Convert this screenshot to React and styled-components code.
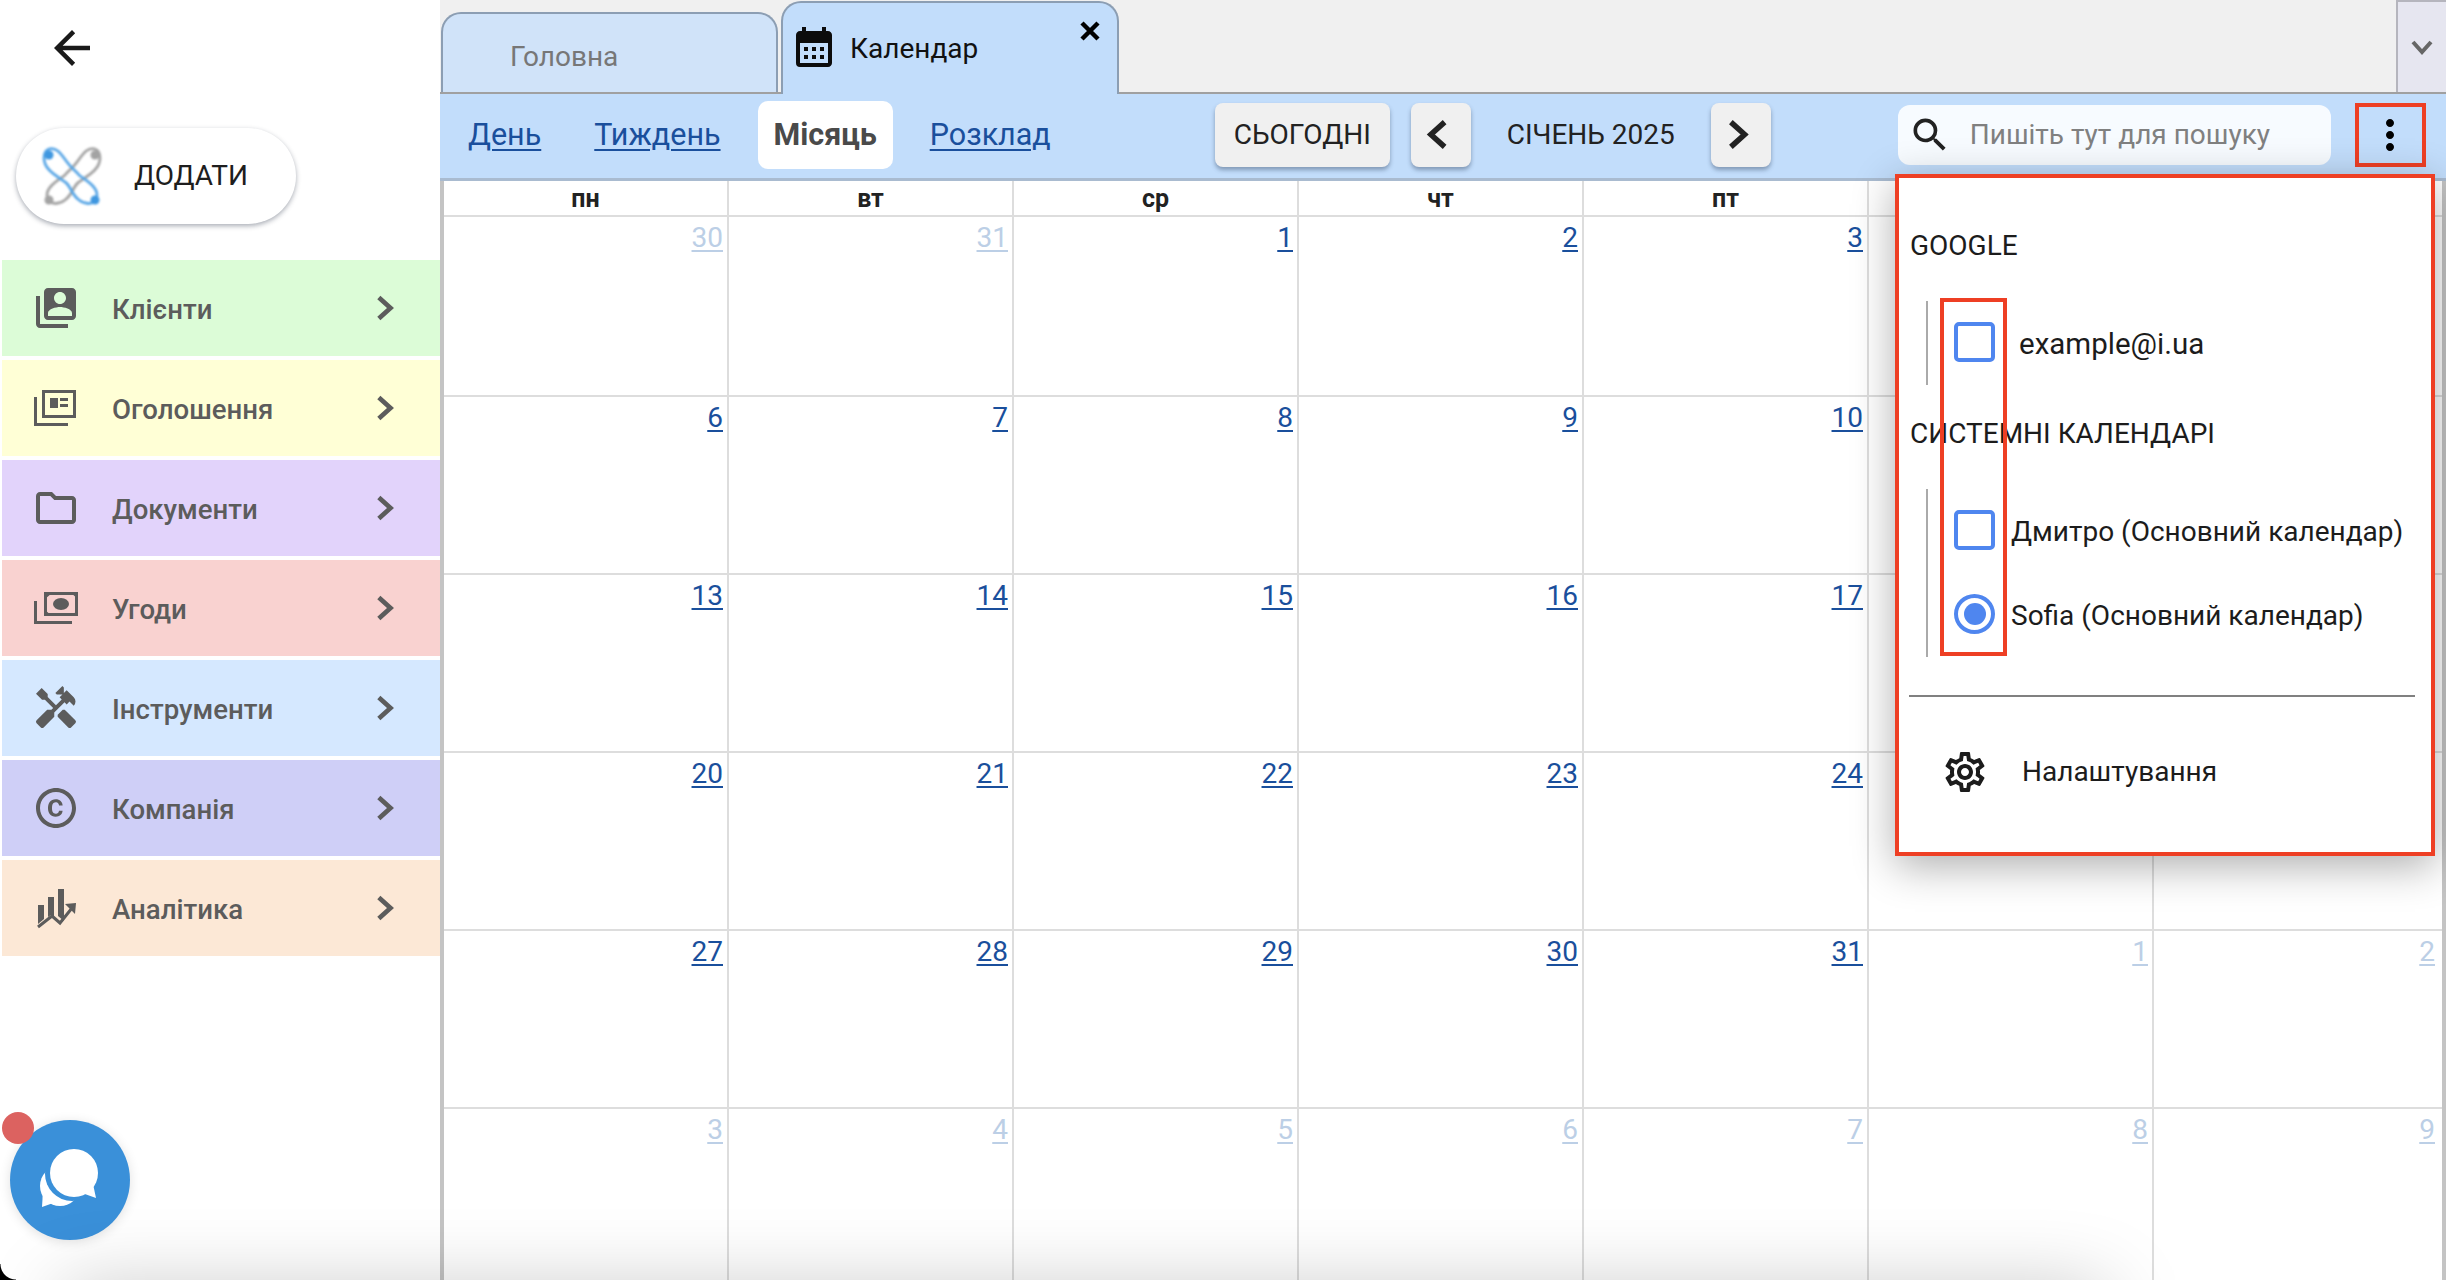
import React from "react";
import styled, { createGlobalStyle } from "styled-components";
import {
  MdSwitchAccount,
  MdOutlineFolder,
  MdHandyman,
  MdOutlineCopyright,
  MdCalendarMonth,
  MdOutlineSettings,
  MdSearch,
  MdMoreVert,
  MdArrowBack,
} from "react-icons/md";

const GlobalStyle = createGlobalStyle`
  html, body { margin: 0; padding: 0; background: #fff; }
  * { box-sizing: border-box; }
  body { font-family: Roboto, "Liberation Sans", sans-serif; }
`;

const Page = styled.div`
  position: relative;
  display: flex;
  width: 2446px;
  height: 1280px;
  overflow: hidden;
  background: #fff;
`;

/* sidebar */
const Sidebar = styled.aside`
  width: 440px;
  flex: none;
  display: flex;
  flex-direction: column;
`;

const BackButton = styled.div`
  height: 96px;
  padding: 21px 0 0 45px;
  color: #1a1a1a;
  svg { display: block; }
`;

const AddPill = styled.div`
  width: 280px;
  height: 96px;
  margin: 32px 0 0 16px;
  padding: 0 0 2px 25px;
  display: flex;
  align-items: center;
  gap: 31px;
  border-radius: 48px;
  background: #fff;
  font-size: 28px;
  color: #1e1e1e;
  box-shadow: 0 2px 5px rgba(40, 50, 70, 0.4);
`;

const LogoMark = styled.svg`
  filter: blur(1px);
  flex: none;
`;

const Menu = styled.nav`
  margin: 36px 0 0 2px;
  display: flex;
  flex-direction: column;
  gap: 4px;
`;

const MenuItem = styled.div`
  height: 96px;
  padding: 0 39px 0 32px;
  display: flex;
  align-items: center;
  background: ${(p) => p.$bg};
  color: #5c5c5c;
  font-size: 27.6px;
  font-weight: 500;
`;

const MenuIcon = styled.span`
  width: 44px;
  height: 48px;
  margin-right: 34px;
  display: flex;
  align-items: center;
  justify-content: center;
  svg { flex: none; }
`;

const MenuLabel = styled.span`
  flex: 1;
  padding-top: 2px;
`;

const ChatButton = styled.div`
  position: absolute;
  left: 10px;
  top: 1120px;
  width: 120px;
  height: 120px;
  border-radius: 50%;
  background: #3a90d9;
  box-shadow: 0 2px 12px rgba(0, 0, 0, 0.12);
`;

const ChatBadge = styled.span`
  position: absolute;
  left: 2px;
  top: 1112px;
  width: 32px;
  height: 32px;
  border-radius: 50%;
  background: #dc6260;
`;

/* main column */
const Main = styled.main`
  flex: 1;
  min-width: 0;
  display: flex;
  flex-direction: column;
`;

const TabBar = styled.div`
  height: 94px;
  flex: none;
  display: flex;
  align-items: flex-end;
  padding-left: 1px;
  gap: 3px;
  background: #f0f0f0;
  border-bottom: 2px solid #a0a0a0;
`;

const Tab = styled.div`
  height: ${(p) => (p.$active ? "93px" : "80px")};
  width: ${(p) => (p.$active ? "338px" : "337px")};
  margin-bottom: ${(p) => (p.$active ? "-2px" : "0")};
  padding: ${(p) => (p.$active ? "20px 16px 0 7px" : "26px 0 0 67px")};
  display: flex;
  align-items: flex-start;
  border: 2px solid #8c9eb3;
  border-bottom: none;
  border-radius: 20px 20px 0 0;
  background: ${(p) => (p.$active ? "#c2ddfb" : "#d0e3f9")};
  color: ${(p) => (p.$active ? "#111" : "#777")};
  font-size: 28px;
  line-height: 34px;
  svg { flex: none; }
`;

const TabIcon = styled.span`
  height: 48px;
  margin: 0 12px 0 0;
  display: flex;
  color: #0c0c0c;
`;

const TabTitle = styled.span`
  flex: 1;
  padding-top: 9px;
`;

const CloseIcon = styled.svg`
  margin-top: -3px;
`;

const TabScroller = styled.div`
  width: 50px;
  height: 92px;
  margin-left: auto;
  display: flex;
  align-items: center;
  justify-content: center;
  background: #e6e6f0;
  border-top: 2px solid #b5b5bd;
  border-left: 2px solid #b5b5bd;
`;

const Toolbar = styled.div`
  height: 87px;
  flex: none;
  padding: 0 18px 3px 12px;
  display: flex;
  align-items: center;
  background: #c2ddfb;
  border-bottom: 3px solid #a9bbd0;
`;

const ViewLinks = styled.div`
  display: flex;
  gap: 21px;
`;

const ViewLink = styled.a`
  height: 68px;
  padding: 0 16px;
  display: flex;
  align-items: center;
  border-radius: 10px;
  font-size: 30.5px;
  color: ${(p) => (p.$active ? "#4a4a4a" : "#1a4f9c")};
  font-weight: ${(p) => (p.$active ? 700 : 400)};
  text-decoration: ${(p) => (p.$active ? "none" : "underline")};
  text-decoration-thickness: 2px;
  text-underline-offset: 4px;
  background: ${(p) => (p.$active ? "#fff" : "transparent")};
`;

const Controls = styled.div`
  margin-left: 148px;
  display: flex;
  align-items: center;
`;

const ToolButton = styled.button`
  width: ${(p) => p.$width}px;
  height: 64px;
  margin-right: ${(p) => p.$gap || 0}px;
  padding: 0;
  display: flex;
  align-items: center;
  justify-content: center;
  border: none;
  border-radius: 8px;
  background: #f0f0f0;
  color: #222;
  font: 400 28px Roboto, sans-serif;
  box-shadow: 0 3px 4px rgba(50, 70, 100, 0.45);
`;

const MonthLabel = styled.span`
  width: 240px;
  text-align: center;
  font-size: 28px;
  color: #222;
`;

const SearchBox = styled.div`
  width: 433px;
  height: 60px;
  margin-left: 127px;
  padding-left: 10px;
  display: flex;
  align-items: center;
  border-radius: 12px;
  background: #f7fbff;
  color: #222;
  svg { flex: none; }
`;

const Placeholder = styled.span`
  margin-left: 18px;
  font-size: 28px;
  color: #808080;
`;

const KebabBox = styled.div`
  width: 71px;
  height: 64px;
  margin-left: 24px;
  display: flex;
  align-items: center;
  justify-content: center;
  border: 4.5px solid #ee3f24;
  color: #000;
`;

/* month grid */
const CalendarGrid = styled.div`
  flex: 1;
  min-height: 0;
  display: grid;
  grid-template-columns: repeat(6, 285px) 1fr;
  grid-template-rows: 36px 180px repeat(5, 178px);
  border-left: 4px solid #c4c4c4;
  border-right: 4px solid #c4c4c4;
  background: #fff;
`;

const DayHead = styled.div`
  display: flex;
  align-items: center;
  justify-content: center;
  font-size: 25px;
  font-weight: 700;
  color: #222;
  border-right: ${(p) => (p.$last ? "none" : "2px solid #ddd")};
  border-bottom: 2px solid #ddd;
`;

const DayCell = styled.div`
  padding: 5px ${(p) => (p.$last ? "7px" : "4px")} 0 0;
  text-align: right;
  font-size: 28px;
  line-height: 32px;
  border-right: ${(p) => (p.$last ? "none" : "2px solid #ddd")};
  border-bottom: 2px solid #ddd;
`;

const DayLink = styled.a`
  color: ${(p) => (p.$muted ? "#bccfe6" : "#1a4f9c")};
  text-decoration: underline;
  text-decoration-thickness: 2px;
  text-underline-offset: 3px;
`;

/* popup over the grid */
const CalendarMenu = styled.div`
  position: absolute;
  left: 1895px;
  top: 174px;
  width: 540px;
  height: 682px;
  padding: 49px 0 0 11px;
  background: #fff;
  border: 4.5px solid #ee3f24;
  box-shadow: 0 10px 40px rgba(0, 0, 0, 0.32);
  font-size: 28px;
  line-height: 32px;
  color: #1c1c1c;
`;

const SectionTitle = styled.div`
  margin: ${(p) => p.$top || 0}px 0 -3px;
  padding-top: 3px;
`;

const CalendarGroup = styled.div`
  margin: 42px 0 0 16px;
  padding-left: 26px;
  border-left: 2px solid #aaa;
`;

const CalendarRow = styled.div`
  height: 84px;
  padding-bottom: 2px;
  display: flex;
  align-items: center;
  gap: ${(p) => p.$gap}px;
`;

const CalendarLabel = styled.span`
  padding-top: 4px;
  font-size: ${(p) => p.$size || 28}px;
`;

const CheckBox = styled.span`
  width: 41px;
  height: 40px;
  flex: none;
  border: 4px solid #4f86ef;
  border-radius: 5px;
`;

const RadioMark = styled.span`
  width: 41px;
  height: 40px;
  flex: none;
  display: flex;
  align-items: center;
  justify-content: center;
  border: 4px solid #4f86ef;
  border-radius: 50%;
  &::after {
    content: "";
    width: 22px;
    height: 22px;
    border-radius: 50%;
    background: #4f86ef;
  }
`;

const Divider = styled.div`
  width: 506px;
  height: 2px;
  margin: 38px 0 0 -1px;
  background: #808080;
`;

const SettingsRow = styled.div`
  margin: 51px 0 0 31px;
  height: 48px;
  display: flex;
  align-items: center;
  gap: 33px;
  color: #1c1c1c;
`;

const AnnotationBox = styled.div`
  position: absolute;
  left: 1940px;
  top: 298px;
  width: 67px;
  height: 358px;
  border: 4.5px solid #ee3f24;
`;

const BottomShade = styled.div`
  position: absolute;
  left: 65px;
  top: 1292px;
  width: 2040px;
  height: 60px;
  box-shadow: 0 0 80px rgba(0, 0, 0, 0.26);
`;

const WindowCorner = styled.div`
  position: absolute;
  left: 0;
  bottom: 0;
  width: 16px;
  height: 16px;
  background: radial-gradient(circle at 16px 0, transparent 15px, #000 16px);
`;

const Chevron = ({ dir, size, stroke, color }) => {
  const points = {
    right: "5,3 15,12 5,21",
    left: "15,3 5,12 15,21",
    down: "3,7 12,17 21,7",
  }[dir];
  return (
    <svg width={size} height={size} viewBox="0 0 24 24" fill="none">
      <polyline points={points} stroke={color} strokeWidth={stroke} />
    </svg>
  );
};

const FeedIcon = () => (
  <svg width="44" height="40" viewBox="0 0 44 40" fill="none">
    <rect x="9.5" y="3.5" width="31" height="25" stroke="#5c5c5c" strokeWidth="3" />
    <rect x="16" y="10" width="8" height="10" fill="#5c5c5c" />
    <rect x="26" y="10" width="8" height="3" fill="#5c5c5c" />
    <rect x="26" y="16" width="8" height="3" fill="#5c5c5c" />
    <path d="M1.5 9V36.5H34" stroke="#5c5c5c" strokeWidth="3" />
  </svg>
);

const MoneyIcon = () => (
  <svg width="44" height="32" viewBox="0 0 44 32" fill="none">
    <rect x="11.5" y="1.5" width="31" height="21" stroke="#5c5c5c" strokeWidth="3" />
    <ellipse cx="27" cy="12" rx="8" ry="6" fill="#5c5c5c" />
    <path d="M11 1h7l-7 6zM44 1h-7l7 6zM11 24h7l-7-6zM44 24h-7l7-6z" fill="#5c5c5c" />
    <path d="M1.5 9V30.5H38" stroke="#5c5c5c" strokeWidth="3" />
  </svg>
);

const AnalyticsIcon = () => (
  <svg width="40" height="42" viewBox="0 0 40 42" fill="#5c5c5c">
    <path d="M2 18h6v14l-6 5z" />
    <path d="M12 10h6v20l-3-2-3 2z" />
    <path d="M22 2h6v32l-6-5z" />
    <path d="M2 40L16 29l8 7 12-15" fill="none" stroke="#5c5c5c" strokeWidth="3" />
    <path d="M29 17l11-1-1 11z" />
  </svg>
);

const BrandLogo = () => (
  <LogoMark width="62" height="62" viewBox="12 12 62 62" fill="none">
    <path
      d="M66 17C58 15 54 22 48 30C43 37 40 38 36 43C30 48 18 54 18 63C18 72 28 74 36 68C44 62 44 54 50 50C58 44 71 38 71 26C71 20 69 18 66 17Z"
      stroke="#a3a3a3"
      strokeWidth="2.8"
    />
    <circle cx="66" cy="23" r="4.5" fill="#a3a3a3" />
    <circle cx="20" cy="68" r="4.5" fill="#a3a3a3" />
    <path
      d="M20 17C28 15 32 22 38 30C43 37 46 38 50 43C56 48 68 54 68 63C68 72 58 74 50 68C42 62 42 54 36 50C28 44 15 38 15 26C15 20 17 18 20 17Z"
      stroke="#58a6e6"
      strokeWidth="2.8"
    />
    <circle cx="20" cy="23" r="4.5" fill="#3f97e0" />
    <circle cx="66" cy="68" r="4.5" fill="#3f97e0" />
  </LogoMark>
);

const ChatGlyph = () => (
  <svg width="120" height="120" viewBox="0 0 120 120">
    <circle cx="50" cy="66" r="20" fill="#fff" />
    <path d="M33 70L32 87L46 82z" fill="#fff" />
    <circle cx="62" cy="54" r="27" fill="#3a90d9" />
    <circle cx="64" cy="53" r="24" fill="#fff" />
    <path d="M83 64L86 78L72 73z" fill="#fff" />
  </svg>
);

const MENU = [
  { label: "Клієнти", bg: "#dcfcd7", icon: <MdSwitchAccount size={48} /> },
  { label: "Оголошення", bg: "#ffffd6", icon: <FeedIcon /> },
  { label: "Документи", bg: "#e2d3fb", icon: <MdOutlineFolder size={48} /> },
  { label: "Угоди", bg: "#f9d2d0", icon: <MoneyIcon /> },
  { label: "Інструменти", bg: "#d5e8ff", icon: <MdHandyman size={48} /> },
  { label: "Компанія", bg: "#cfcff7", icon: <MdOutlineCopyright size={48} /> },
  { label: "Аналітика", bg: "#fce8d6", icon: <AnalyticsIcon /> },
];

const DAYS = ["пн", "вт", "ср", "чт", "пт", "сб", "нд"];

// grid of january 2025, neighbours of the month are muted
const WEEKS = [
  [30, 31, 1, 2, 3, 4, 5],
  [6, 7, 8, 9, 10, 11, 12],
  [13, 14, 15, 16, 17, 18, 19],
  [20, 21, 22, 23, 24, 25, 26],
  [27, 28, 29, 30, 31, 1, 2],
  [3, 4, 5, 6, 7, 8, 9],
];

const isMuted = (week, day) => (week === 0 && day > 20) || (week === 4 && day < 20) || week === 5;

const App = () => (
  <Page>
    <GlobalStyle />
    <Sidebar>
      <BackButton>
        <MdArrowBack size={54} />
      </BackButton>
      <AddPill>
        <BrandLogo />
        ДОДАТИ
      </AddPill>
      <Menu>
        {MENU.map((item) => (
          <MenuItem key={item.label} $bg={item.bg}>
            <MenuIcon>{item.icon}</MenuIcon>
            <MenuLabel>{item.label}</MenuLabel>
            <Chevron dir="right" size={28} stroke={4} color="#5c5c5c" />
          </MenuItem>
        ))}
      </Menu>
    </Sidebar>

    <Main>
      <TabBar>
        <Tab>Головна</Tab>
        <Tab $active>
          <TabIcon>
            <MdCalendarMonth size={48} />
          </TabIcon>
          <TabTitle>Календар</TabTitle>
          <CloseIcon width="22" height="22" viewBox="0 0 22 22">
            <path d="M3 3L19 19M19 3L3 19" stroke="#000" strokeWidth="4.5" />
          </CloseIcon>
        </Tab>
        <TabScroller>
          <Chevron dir="down" size={24} stroke={4} color="#666" />
        </TabScroller>
      </TabBar>

      <Toolbar>
        <ViewLinks>
          <ViewLink>День</ViewLink>
          <ViewLink>Тиждень</ViewLink>
          <ViewLink $active>Місяць</ViewLink>
          <ViewLink>Розклад</ViewLink>
        </ViewLinks>
        <Controls>
          <ToolButton $width={175} $gap={21}>
            СЬОГОДНІ
          </ToolButton>
          <ToolButton $width={60}>
            <Chevron dir="left" size={33} stroke={4} color="#222" />
          </ToolButton>
          <MonthLabel>СІЧЕНЬ 2025</MonthLabel>
          <ToolButton $width={60}>
            <Chevron dir="right" size={33} stroke={4} color="#222" />
          </ToolButton>
        </Controls>
        <SearchBox>
          <MdSearch size={44} />
          <Placeholder>Пишіть тут для пошуку</Placeholder>
        </SearchBox>
        <KebabBox>
          <MdMoreVert size={48} />
        </KebabBox>
      </Toolbar>

      <CalendarGrid>
        {DAYS.map((d, i) => (
          <DayHead key={d} $last={i === 6}>
            {d}
          </DayHead>
        ))}
        {WEEKS.map((week, w) =>
          week.map((day, i) => (
            <DayCell key={`${w}-${i}`} $last={i === 6}>
              <DayLink $muted={isMuted(w, day)}>{day}</DayLink>
            </DayCell>
          ))
        )}
      </CalendarGrid>
    </Main>

    <CalendarMenu>
      <SectionTitle>GOOGLE</SectionTitle>
      <CalendarGroup>
        <CalendarRow $gap={24}>
          <CheckBox />
          <CalendarLabel $size={29.5}>example@i.ua</CalendarLabel>
        </CalendarRow>
      </CalendarGroup>
      <SectionTitle $top={30}>СИСТЕМНІ КАЛЕНДАРІ</SectionTitle>
      <CalendarGroup>
        <CalendarRow $gap={16}>
          <CheckBox />
          <CalendarLabel>Дмитро (Основний календар)</CalendarLabel>
        </CalendarRow>
        <CalendarRow $gap={16}>
          <RadioMark />
          <CalendarLabel>Sofia (Основний календар)</CalendarLabel>
        </CalendarRow>
      </CalendarGroup>
      <Divider />
      <SettingsRow>
        <MdOutlineSettings size={48} />
        Налаштування
      </SettingsRow>
    </CalendarMenu>
    <AnnotationBox />

    <ChatButton>
      <ChatGlyph />
    </ChatButton>
    <ChatBadge />
    <BottomShade />
    <WindowCorner />
  </Page>
);

export default App;
